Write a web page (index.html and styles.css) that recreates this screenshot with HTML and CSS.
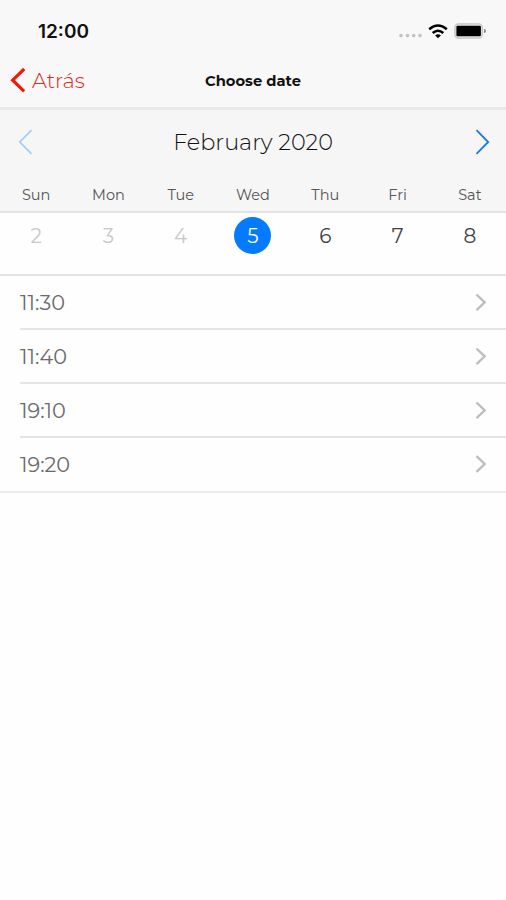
FILE: index.html
```html
<!DOCTYPE html>
<html lang="en">
<head>
<meta charset="utf-8">
<meta name="viewport" content="width=device-width">
<title>Choose date</title>
<link rel="stylesheet" href="styles.css">
</head>
<body>
<header class="top">
  <div class="status">
    <span class="clock">12:00</span>
    <div class="indicators">
      <svg class="dots" width="25" height="6" viewBox="0 0 25 6"><g fill="#c2c2c4"><circle cx="3" cy="2.6" r="1.8"/><circle cx="9.5" cy="2.6" r="1.8"/><circle cx="15.7" cy="2.6" r="1.8"/><circle cx="22" cy="2.6" r="1.8"/></g></svg>
      <svg class="wifi" width="20" height="15" viewBox="0 0 20 15"><g fill="none" stroke="#000" stroke-width="2.5"><path d="M1.2 5.3Q10-2.4 18.8 5.3"/><path d="M4.7 9Q10 4.4 15.3 9"/></g><path d="M7.1 11.4Q10 9 12.9 11.4L10 14.3Z"/></svg>
      <svg class="battery" width="33" height="16" viewBox="0 0 33 16"><rect x=".9" y=".9" width="27.4" height="14.2" rx="3.6" fill="#e6e6e6" stroke="#c4c4c6" stroke-width="1.3"/><rect x="2.4" y="2.7" width="24.5" height="10.6" rx="1.2"/><path d="M30 5.7Q32 6.3 32 8T30 10.3Z" fill="#8e8e90"/></svg>
    </div>
  </div>
  <nav class="nav">
    <a class="back"><svg width="16" height="26" viewBox="0 0 16 26"><path d="M15.2 1 3.7 12.2 15.2 23.4" fill="none" stroke="#f01808" stroke-width="3.2"/></svg><span class="back-label">Atrás</span></a>
    <h1 class="title">Choose date</h1>
  </nav>
</header>
<section class="calendar">
  <div class="month">
    <svg width="15" height="26" viewBox="0 0 15 26"><path d="M13.5 1.2 1.8 13 13.5 24.8" fill="none" stroke="#9fcdfa" stroke-width="1.7"/></svg>
    <h2 class="month-name">February 2020</h2>
    <svg width="15" height="26" viewBox="0 0 15 26"><path d="M1.5 1.2 13.2 13 1.5 24.8" fill="none" stroke="#147be8" stroke-width="1.8"/></svg>
  </div>
  <div class="grid weekdays"><span>Sun</span><span>Mon</span><span>Tue</span><span>Wed</span><span>Thu</span><span>Fri</span><span>Sat</span></div>
  <div class="grid days"><span class="past">2</span><span class="past">3</span><span class="past">4</span><span class="selected">5</span><span>6</span><span>7</span><span>8</span></div>
</section>
<ul class="times">
  <li><span>11:30</span><svg width="12" height="18" viewBox="0 0 12 18"><path d="M1.5 1.5 9.7 9.3 1.5 17.1"/></svg></li>
  <li><span>11:40</span><svg width="12" height="18" viewBox="0 0 12 18"><path d="M1.5 1.5 9.7 9.3 1.5 17.1"/></svg></li>
  <li><span>19:10</span><svg width="12" height="18" viewBox="0 0 12 18"><path d="M1.5 1.5 9.7 9.3 1.5 17.1"/></svg></li>
  <li><span>19:20</span><svg width="12" height="18" viewBox="0 0 12 18"><path d="M1.5 1.2 9.7 9 1.5 16.8"/></svg></li>
</ul>
</body>
</html>
```
FILE: styles.css
```css
* { box-sizing: border-box; }
body { margin: 0; background: #fefefe; color: #404040; font-family: Montserrat, Inter, "Liberation Sans", sans-serif; }
svg { display: block; flex: none; }
.top { height: 110px; background: #f8f8f8; border-bottom: 3px solid #e9e9e9; }
.status { height: 54px; padding: 8px 19px 0 38px; display: flex; align-items: center; justify-content: space-between; }
.clock { font: 600 19px/46px Inter, sans-serif; color: #111; padding-top: 1px; }
.indicators { display: flex; align-items: center; }
.dots { margin: 9px 5px 0 0; }
.wifi { margin-right: 6px; }
.nav { height: 53px; display: grid; grid-template-columns: 1fr auto 1fr; align-items: center; }
.back { display: flex; align-items: center; gap: 7px; padding-left: 9px; color: #e0281c; }
.back-label { font-size: 21px; font-weight: 300; }
.title { margin: 0; font-size: 14.7px; font-weight: 700; color: #111; line-height: 18px; }
.calendar { background: #f6f6f6; }
.month { height: 65px; display: flex; align-items: center; justify-content: space-between; padding: 0 16px 2px 18px; }
.month-name { margin: 0; font-size: 22.4px; font-weight: 300; color: #111; padding-right: 2px; }
.grid { display: grid; grid-template-columns: repeat(7, 1fr); text-align: center; }
.weekdays { height: 38px; line-height: 40px; font-size: 14.5px; font-weight: 400; color: #555; border-bottom: 2px solid #e4e4e4; }
.days { height: 63px; padding-top: 4px; justify-items: center; background: #fefefe; border-bottom: 2px solid #e4e4e4; font-size: 20px; font-weight: 400; line-height: 38px; }
.past { color: #c8c8c8; }
.selected { width: 37px; height: 37px; border-radius: 50%; background: #047bff; color: #fff; }
.times { margin: 0; padding: 0; list-style: none; border-bottom: 2px solid #ececec; }
.times li { height: 54px; margin-left: 20px; padding-right: 19px; display: flex; align-items: center; justify-content: space-between; border-bottom: 2px solid #e5e5e5; font-size: 20.8px; font-weight: 400; color: #6a6a6a; }
.times li:last-child { border-bottom: 0; height: 53px; padding-bottom: 1px; }
.times path { fill: none; stroke: #bdbdbd; stroke-width: 2.3; }
```
